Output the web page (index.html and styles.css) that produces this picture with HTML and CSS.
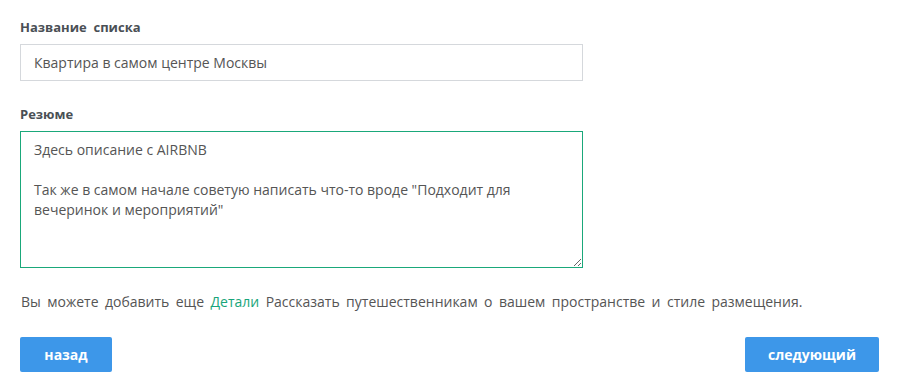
FILE: index.html
```html
<!DOCTYPE html>
<html lang="ru">
<head>
  <meta charset="UTF-8" />
  <meta name="viewport" content="width=device-width, initial-scale=1" />
  <title>Название списка</title>
  <link rel="stylesheet" href="styles.css">
</head>
<body>
  <div class="container">
    <div class="field">
      <label for="title" class="field-label">Название&nbsp; списка</label>
      <input type="text" id="title" class="text-input" value="Квартира в самом центре Москвы" />
    </div>

    <div class="field">
      <label for="summary" class="field-label">Резюме</label>
      <textarea id="summary" class="text-area">Здесь описание с AIRBNB

Так же в самом начале советую написать что-то вроде "Подходит для вечеринок и мероприятий"</textarea>
    </div>

    <p class="hint">Вы можете добавить еще <a href="#" class="hint-link">Детали</a> Рассказать путешественникам о вашем пространстве и стиле размещения.</p>

    <div class="actions">
      <button class="button button-back">назад</button>
      <button class="button button-next">следующий</button>
    </div>
  </div>
</body>
</html>
```

FILE: styles.css
```css
body {
  font-family: 'Open Sans', 'Noto Sans', sans-serif;
  background: #fff;
  color: #555;
  margin: 0;
  padding: 0;
}
.container {
  padding: 18px 30px 0 20px;
}
.field {
  margin-bottom: 24px;
}
.field-label {
  display: block;
  font-size: 13px;
  font-weight: 700;
  color: #4a4f55;
  line-height: 18px;
  margin-bottom: 8px;
}
.text-input,
.text-area {
  display: block;
  box-sizing: border-box;
  width: 563px;
  margin: 0;
  font-family: inherit;
  font-size: 14px;
  color: #555;
  background: #fff;
  border-radius: 0;
  outline: none;
}
.text-input {
  height: 37px;
  padding: 0 13px;
  border: 1px solid #d5d8dc;
}
.text-area {
  height: 137px;
  padding: 8px 13px;
  line-height: 20px;
  border: 1px solid #1aa87a;
  resize: vertical;
}
.hint {
  font-size: 14px;
  line-height: 20px;
  word-spacing: 2.8px;
  margin: 0 0 25px 1px;
  color: #555;
}
.hint-link {
  color: #17a57a;
  text-decoration: none;
}
.actions {
  display: flex;
  justify-content: space-between;
}
.button {
  background-color: #3d97e9;
  border: none;
  border-radius: 2px;
  height: 35px;
  color: #fff;
  font-family: inherit;
  font-size: 14px;
  font-weight: 700;
  cursor: pointer;
}
.button-back {
  width: 92px;
}
.button-next {
  width: 134px;
}
```
